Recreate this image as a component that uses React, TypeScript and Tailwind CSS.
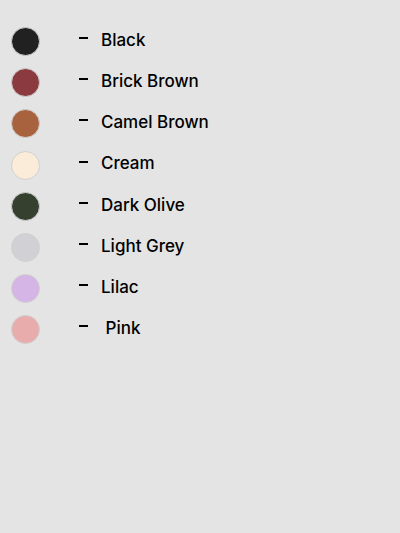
const colours = [
  { name: "Black", hex: "#212121" },
  { name: "Brick Brown", hex: "#8b3b3f" },
  { name: "Camel Brown", hex: "#a8623e" },
  { name: "Cream", hex: "#fbecd9" },
  { name: "Dark Olive", hex: "#36402f" },
  { name: "Light Grey", hex: "#d1d0d5" },
  { name: "Lilac", hex: "#d4b5e5" },
  { name: " Pink", hex: "#e8acac" },
];

export default function App() {
  return (
    <div
      className="min-h-[533px] w-[400px] bg-[#e4e4e4] pt-[21px] pl-[11px]"
      style={{ fontFamily: "Inter, 'Noto Sans', sans-serif" }}
    >
      {colours.map((c) => (
        <div key={c.name} className="flex h-[41.2px] items-center">
          <span
            className="h-[29px] w-[29px] shrink-0 rounded-full border border-[#d0d0d0]"
            style={{ backgroundColor: c.hex }}
          />
          <span className="ml-[39px] mb-[7px] h-[2px] w-[9px] bg-black" />
          <span className="ml-[13px] mb-[2px] whitespace-pre text-[17px] font-medium text-black">
            {c.name}
          </span>
        </div>
      ))}
    </div>
  );
}
